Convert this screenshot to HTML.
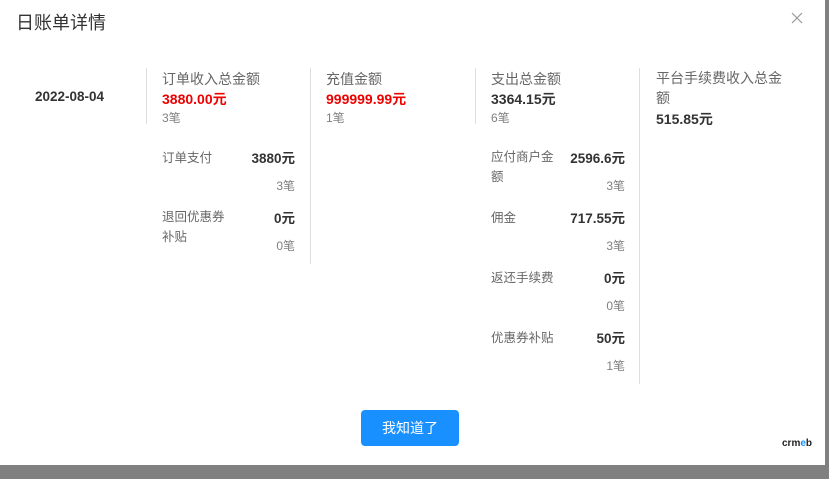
<!DOCTYPE html>
<html><head><meta charset="utf-8"><style>
*{margin:0;padding:0;box-sizing:border-box}
body{width:829px;height:479px;background:#808080;font-family:"Liberation Sans","Noto Sans CJK SC",sans-serif;position:relative;overflow:hidden;font-size:12px;color:#333}
.m{position:absolute;left:0;top:0;width:825px;height:465px;background:#fff}
.a{position:absolute;white-space:nowrap}
.t{left:16px;top:9px;font-size:18px;color:#333}
.l{font-size:14px;color:#666}
.l2{font-size:12.5px;color:#666}
.v{position:absolute;width:1px;background:#dcdee2}
.r{color:#ed0000;font-weight:bold;font-size:14px}
.b{font-weight:bold;font-size:13.5px;color:#333}
.bt{font-weight:bold;font-size:14px;color:#333}
.s{color:#808080;font-size:12px}
.rt{text-align:right;width:80px}
.btn{position:absolute;left:361px;top:410px;width:98px;height:36px;background:#1890ff;border-radius:4px;color:#fff;font-size:14px;text-align:center;line-height:36px}
</style></head><body><div class="m">
<div class="a t">日账单详情</div>
<svg class="a" style="left:791px;top:12px" width="12" height="12" viewBox="0 0 12 12"><path d="M1 1L11 11M11 1L1 11" stroke="#999" stroke-width="1.2"/></svg>
<div class="a b" style="left:35px;top:89px">2022-08-04</div>
<div class="v" style="left:146px;top:68px;height:56px"></div>
<div class="v" style="left:310px;top:68px;height:196px"></div>
<div class="v" style="left:475px;top:68px;height:56px"></div>
<div class="v" style="left:639px;top:68px;height:316px"></div>

<div class="a l" style="left:162px;top:69px">订单收入总金额</div>
<div class="a r" style="left:162px;top:89px">3880.00元</div>
<div class="a s" style="left:162px;top:109px">3笔</div>
<div class="a l2" style="left:162px;top:147px">订单支付</div>
<div class="a b rt" style="left:215px;top:147px">3880元</div>
<div class="a s rt" style="left:215px;top:177px">3笔</div>
<div class="a l2" style="left:162px;top:207px;line-height:20px">退回优惠券<br>补贴</div>
<div class="a b rt" style="left:215px;top:207px">0元</div>
<div class="a s rt" style="left:215px;top:237px">0笔</div>

<div class="a l" style="left:326px;top:69px">充值金额</div>
<div class="a r" style="left:326px;top:89px">999999.99元</div>
<div class="a s" style="left:326px;top:109px">1笔</div>

<div class="a l" style="left:491px;top:69px">支出总金额</div>
<div class="a bt" style="left:491px;top:89px">3364.15元</div>
<div class="a s" style="left:491px;top:109px">6笔</div>
<div class="a l2" style="left:491px;top:147px;line-height:20px">应付商户金<br>额</div>
<div class="a b rt" style="left:545px;top:147px">2596.6元</div>
<div class="a s rt" style="left:545px;top:177px">3笔</div>
<div class="a l2" style="left:491px;top:207px">佣金</div>
<div class="a b rt" style="left:545px;top:207px">717.55元</div>
<div class="a s rt" style="left:545px;top:237px">3笔</div>
<div class="a l2" style="left:491px;top:267px">返还手续费</div>
<div class="a b rt" style="left:545px;top:267px">0元</div>
<div class="a s rt" style="left:545px;top:297px">0笔</div>
<div class="a l2" style="left:491px;top:327px">优惠券补贴</div>
<div class="a b rt" style="left:545px;top:327px">50元</div>
<div class="a s rt" style="left:545px;top:357px">1笔</div>

<div class="a l" style="left:656px;top:68px;line-height:20px">平台手续费收入总金<br>额</div>
<div class="a bt" style="left:656px;top:109px">515.85元</div>

<div class="btn">我知道了</div>
<div class="a" style="left:782px;top:438px;font-size:10px;font-weight:bold;color:#222">crm<span style="color:#1890ff">e</span>b</div>
</div></body></html>
